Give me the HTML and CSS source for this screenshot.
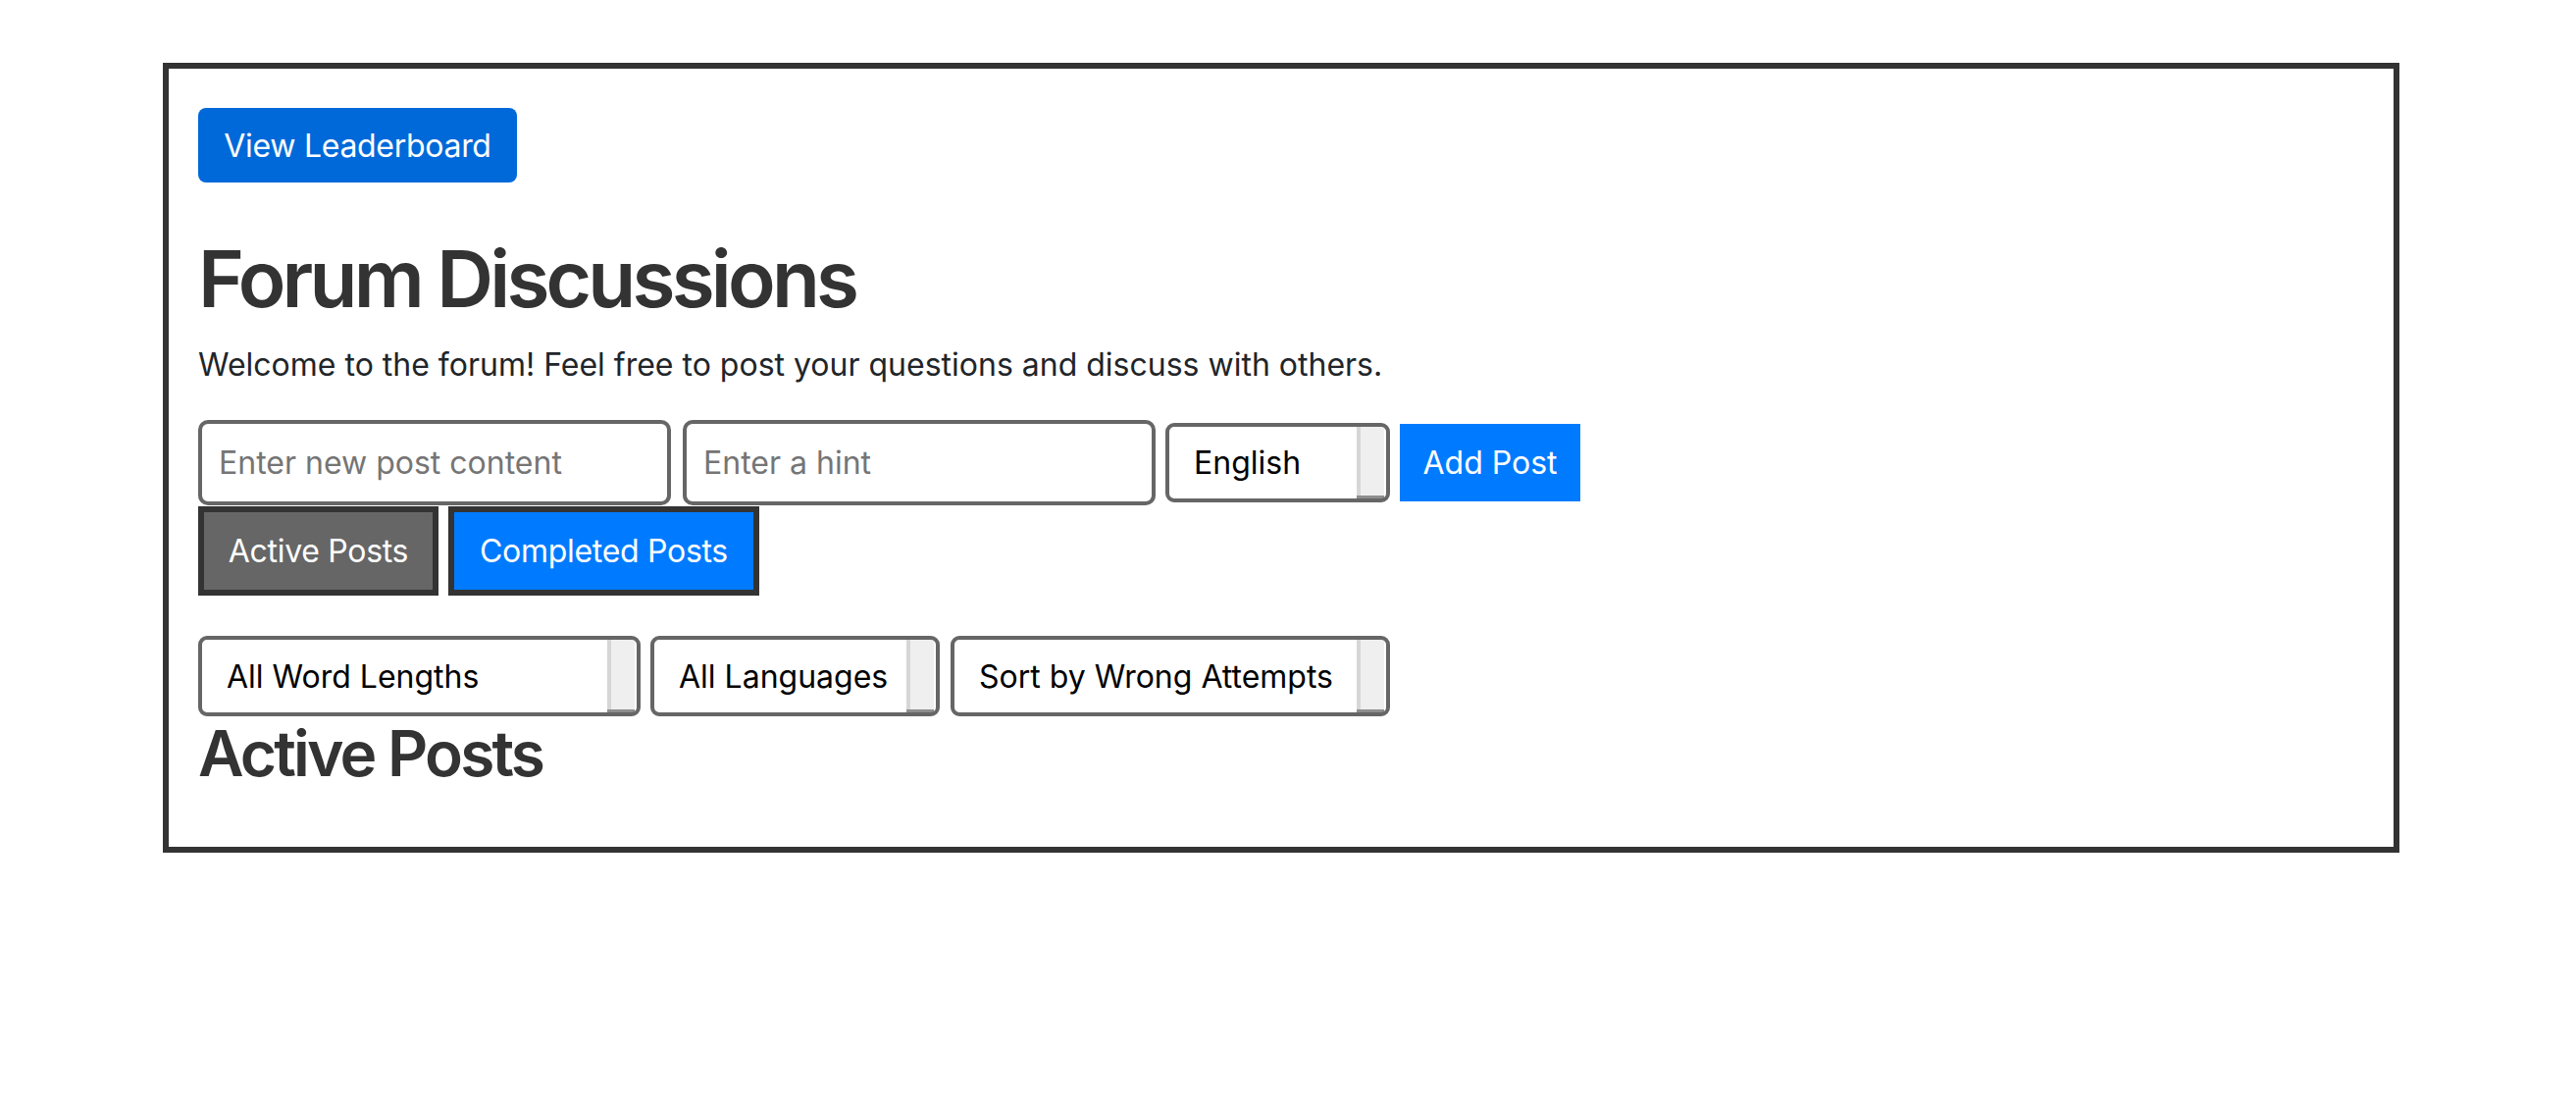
FILE: index.html
```html
<!DOCTYPE html>
<html lang="en">
<head>
<meta charset="utf-8">
<title>Forum Discussions</title>
<link rel="stylesheet" href="styles.css">
</head>
<body>
<div class="forum">
  <button class="btn-leaderboard" type="button">View Leaderboard</button>
  <h1 class="title">Forum Discussions</h1>
  <p class="intro">Welcome to the forum! Feel free to post your questions and discuss with others.</p>
  <div class="new-post">
    <input class="field field-content" type="text" placeholder="Enter new post content">
    <input class="field field-hint" type="text" placeholder="Enter a hint">
    <select class="select select-lang">
      <option>English</option>
      <option>Spanish</option>
      <option>French</option>
    </select>
    <button class="btn-add" type="button">Add Post</button>
  </div>
  <div class="tabs">
    <button class="tab tab-active" type="button">Active Posts</button>
    <button class="tab tab-completed" type="button">Completed Posts</button>
  </div>
  <div class="filters">
    <select class="select filter filter-length">
      <option>All Word Lengths</option>
    </select>
    <select class="select filter filter-lang">
      <option>All Languages</option>
    </select>
    <select class="select filter filter-sort">
      <option>Sort by Wrong Attempts</option>
    </select>
  </div>
  <h2 class="section-title">Active Posts</h2>
</div>
</body>
</html>
```

FILE: styles.css
```css
html, body {
  margin: 0;
  padding: 0;
  background: #ffffff;
}

body {
  font-family: Inter, "Noto Sans", "Liberation Sans", sans-serif;
  color: #212529;
}

.forum {
  box-sizing: border-box;
  width: 2280px;
  margin: 64px 0 0 166px;
  border: 6px solid #333333;
  padding: 40px 30px 40px 30px;
}

.btn-leaderboard {
  display: block;
  box-sizing: border-box;
  width: 325px;
  height: 76px;
  padding: 0;
  margin: 0 0 50px 0;
  border: none;
  border-radius: 8px;
  background: #0069d9;
  color: #ffffff;
  font-family: inherit;
  font-size: 32px;
  letter-spacing: -0.3px;
  white-space: nowrap;
  cursor: pointer;
}

.title {
  margin: 0 0 16px 0;
  font-size: 80px;
  font-weight: 600;
  letter-spacing: -3.8px;
  line-height: 1.2;
  color: #333333;
}

.intro {
  margin: 0 0 32px 0;
  font-size: 32px;
  line-height: 1.5;
}

.new-post {
  display: flex;
  align-items: center;
  height: 87px;
}

.field {
  box-sizing: border-box;
  width: 482px;
  height: 87px;
  padding: 0 17px;
  border: 4px solid #666666;
  border-radius: 10px;
  font-family: inherit;
  font-size: 32px;
  color: #212529;
  background: #ffffff;
  outline: none;
}

.field::placeholder {
  color: #757575;
}

.field-content {
  margin-right: 12px;
}

.field-hint {
  margin-right: 10px;
}

.select {
  box-sizing: border-box;
  -webkit-appearance: none;
  appearance: none;
  border: 4px solid #666666;
  border-radius: 9px;
  padding: 0 40px 0 25px;
  font-family: inherit;
  font-size: 32px;
  color: #000000;
  background-color: #ffffff;
  background-image:
    linear-gradient(#8e8e8e, #8e8e8e),
    linear-gradient(#d6d6d6, #d6d6d6),
    linear-gradient(#efefef, #efefef);
  background-repeat: no-repeat;
  background-size: 28px 3px, 4px 100%, 28px 100%;
  background-position: right 2px bottom 0, right 26px top 0, right 2px top 0;
  outline: none;
}

.select-lang {
  width: 229px;
  height: 81px;
  margin-right: 10px;
}

.btn-add {
  box-sizing: border-box;
  width: 184px;
  height: 79px;
  padding: 0;
  border: none;
  border-radius: 0;
  background: #007bff;
  color: #ffffff;
  font-family: inherit;
  font-size: 32px;
  white-space: nowrap;
  cursor: pointer;
}

.tabs {
  display: flex;
  gap: 10px;
  margin: 1px 0 41px 0;
}

.tab {
  box-sizing: border-box;
  height: 91px;
  padding: 0;
  border: 6px solid #333333;
  border-radius: 0;
  color: #ffffff;
  font-family: inherit;
  font-size: 32px;
  letter-spacing: -0.3px;
  white-space: nowrap;
  text-align: center;
  cursor: pointer;
}

.tab-active {
  width: 245px;
  background: #666666;
}

.tab-completed {
  width: 317px;
  background: #007bff;
}

.filters {
  display: flex;
  align-items: center;
  height: 82px;
}

.filter {
  height: 82px;
}

.filter-length {
  width: 451px;
  margin-right: 10px;
}

.filter-lang {
  width: 295px;
  margin-right: 11px;
}

.filter-sort {
  width: 448px;
}

.section-title {
  margin: 0 0 16px 0;
  font-size: 64px;
  font-weight: 600;
  letter-spacing: -2.8px;
  line-height: 1.2;
  color: #333333;
}
```
